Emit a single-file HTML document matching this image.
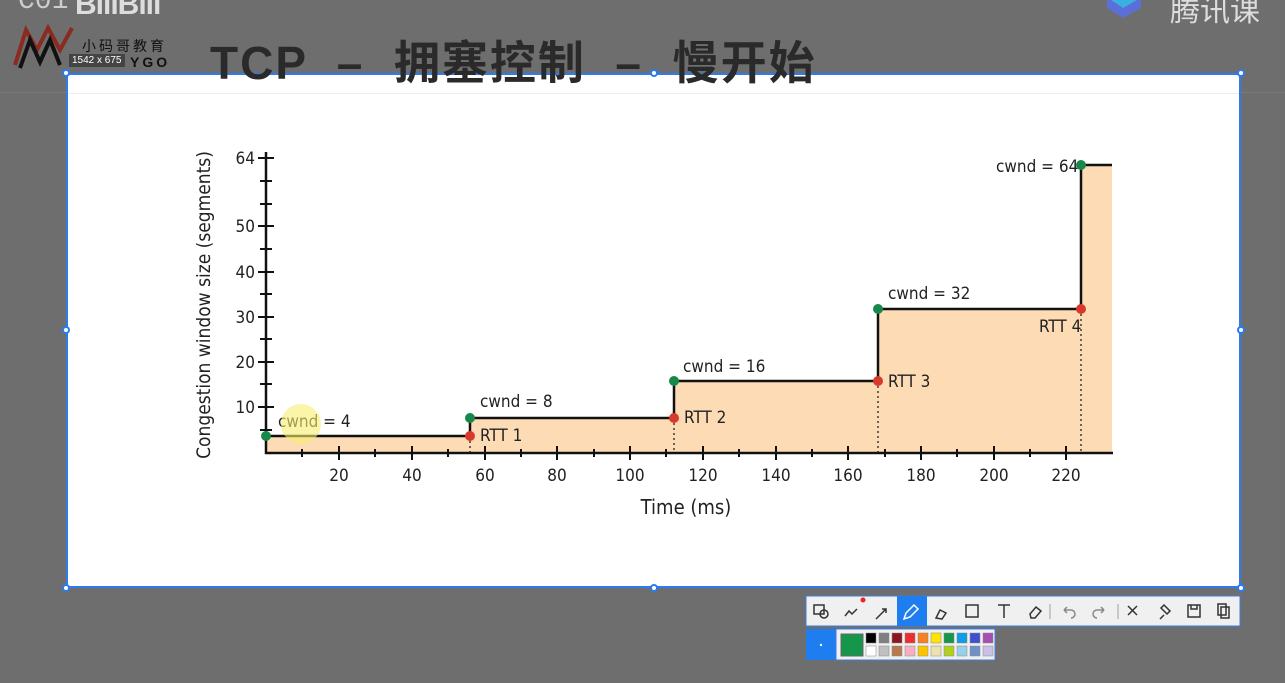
<!DOCTYPE html>
<html><head><meta charset="utf-8"><style>
body{margin:0;width:1285px;height:683px;background:#6e6e6e;overflow:hidden;position:relative;font-family:"Liberation Sans","Noto Sans CJK SC",sans-serif}
.abs{position:absolute}
</style></head><body>
<div class="abs" style="left:0;top:92px;width:1285px;height:1px;background:#7a7a7a"></div>
<div class="abs" style="left:18px;top:-14px;font-size:28px;color:#ccc;font-family:'Liberation Mono',monospace">C01</div>
<div class="abs" style="left:75px;top:-12px;font-size:30px;color:#ddd;font-weight:bold;letter-spacing:-1px">BılıBılı</div>
<svg class="abs" style="left:12px;top:20px" width="65" height="50"><path d="M3 45 L14 10 L25 30 L36 8 L48 30 L60 8" stroke="#8a2a20" stroke-width="4" fill="none"/><path d="M8 48 L18 20 L28 42 L38 20 L48 45" stroke="#111" stroke-width="4" fill="none"/></svg>
<div class="abs" style="left:82px;top:36px;font-size:14px;color:#111;letter-spacing:3px">小码哥教育</div>
<div class="abs" style="left:130px;top:54px;font-size:14px;color:#111;letter-spacing:3px;font-weight:bold">YGO</div>
<svg class="abs" style="left:1105px;top:0" width="40" height="22"><path d="M2 0 L2 8 L18 18 L36 8 L36 0" fill="#5b6fd8"/><path d="M6 0 L18 8 L32 0" fill="#3ab0e0"/></svg>
<div class="abs" style="left:1170px;top:-14px;font-size:30px;color:#ddd">腾讯课</div>
<div class="abs" style="left:66px;top:73px;width:1175px;height:515px;background:#fff;border:2px solid #2a7cf0;box-sizing:border-box"></div>
<div class="abs" style="left:68px;top:93px;width:1171px;height:1px;background:#eee"></div>
<div class="abs" style="left:210px;top:27px;font-size:46px;font-weight:bold;color:#2a2a2a;white-space:nowrap;letter-spacing:2px;z-index:2">TCP &nbsp;– &nbsp;拥塞控制 &nbsp;– &nbsp;慢开始</div>
<div class="abs" style="left:69px;top:54px;font-size:10px;color:#fff;background:#444;padding:1px 3px;z-index:3">1542 x 675</div>
<svg class="abs" style="left:0;top:0;z-index:4" width="1285" height="683">
<g fill="#2a7cf0"><circle cx="66" cy="73" r="4"/><circle cx="654" cy="73" r="4"/><circle cx="1241" cy="73" r="4"/><circle cx="66" cy="330" r="4"/><circle cx="1241" cy="330" r="4"/><circle cx="66" cy="588" r="4"/><circle cx="654" cy="588" r="4"/><circle cx="1241" cy="588" r="4"/></g>
<g fill="#fff"><circle cx="66" cy="73" r="2"/><circle cx="654" cy="73" r="2"/><circle cx="1241" cy="73" r="2"/><circle cx="66" cy="330" r="2"/><circle cx="1241" cy="330" r="2"/><circle cx="66" cy="588" r="2"/><circle cx="654" cy="588" r="2"/><circle cx="1241" cy="588" r="2"/></g>
<path d="M266 453 L266 436 L470 436 L470 418 L674 418 L674 381 L878 381 L878 309 L1081 309 L1081 165 L1112 165 L1112 453 Z" fill="#fddcb5"/>
<path d="M266 436 L470 436 L470 418 L674 418 L674 381 L878 381 L878 309 L1081 309 L1081 165 L1112 165" fill="none" stroke="#111" stroke-width="2.5"/>
<g stroke="#111" stroke-dasharray="2,3" stroke-width="1.2"><path d="M470 436V453M674 418V453M878 381V453M1081 309V453"/></g>
<path d="M266 152V453H1113" stroke="#111" stroke-width="2.5" fill="none"/>
<g stroke="#111" stroke-width="2"><path d="M258 158h16M258 407h16M258 362h16M258 317h16M258 272h16M258 226h16M260 430h12M260 384h12M260 339h12M260 294h12M260 249h12M260 204h12M260 181h12"/>
<path d="M339 446v14M412 446v14M485 446v14M557 446v14M630 446v14M703 446v14M776 446v14M848 446v14M921 446v14M994 446v14M1066 446v14M302 449v8M375 449v8M448 449v8M521 449v8M594 449v8M666 449v8M739 449v8M812 449v8M885 449v8M957 449v8M1030 449v8"/></g>
<g font-family="DejaVu Sans,sans-serif" font-stretch="condensed" style="font-stretch:condensed" font-size="17" fill="#222">
<g text-anchor="end"><text x="255" y="164">64</text><text x="255" y="232">50</text><text x="255" y="278">40</text><text x="255" y="323">30</text><text x="255" y="368">20</text><text x="255" y="413">10</text></g>
<g text-anchor="middle"><text x="339" y="481">20</text><text x="412" y="481">40</text><text x="485" y="481">60</text><text x="557" y="481">80</text><text x="630" y="481">100</text><text x="703" y="481">120</text><text x="776" y="481">140</text><text x="848" y="481">160</text><text x="921" y="481">180</text><text x="994" y="481">200</text><text x="1066" y="481">220</text>
<text x="686" y="514" font-size="20">Time (ms)</text></g>
<text transform="translate(210 305) rotate(-90)" text-anchor="middle" font-size="19">Congestion window size (segments)</text>
<text x="278" y="427">cwnd = 4</text><text x="480" y="407">cwnd = 8</text><text x="683" y="372">cwnd = 16</text><text x="888" y="299">cwnd = 32</text><text x="996" y="172">cwnd = 64</text>
<text x="480" y="441">RTT 1</text><text x="684" y="423">RTT 2</text><text x="888" y="387">RTT 3</text><text x="1039" y="332">RTT 4</text>
</g>
<circle cx="301" cy="424" r="20" fill="#f8ef70" opacity="0.6"/>
<g fill="#15884a"><circle cx="266" cy="436" r="5"/><circle cx="470" cy="418" r="5"/><circle cx="674" cy="381" r="5"/><circle cx="878" cy="309" r="5"/><circle cx="1081" cy="165" r="5"/></g>
<g fill="#d9382c"><circle cx="470" cy="436" r="5"/><circle cx="674" cy="418" r="5"/><circle cx="878" cy="381" r="5"/><circle cx="1081" cy="309" r="5"/></g>
<rect x="806" y="596" width="434" height="30" fill="#f0f0f0" stroke="#3a7ee8"/>
<rect x="897" y="596" width="30" height="30" fill="#1e7ef0"/>
<g stroke="#333" stroke-width="1.5" fill="none">
<rect x="814" y="605" width="10" height="9"/><circle cx="824" cy="614" r="4"/>
<path d="M845 616l4-5 3 3 5-5"/><path d="M876 619l10-10M882 609h4v4"/>
<path d="M904 619l2-6 8-8 4 4-8 8z" stroke="#fff"/>
<path d="M936 618l4-8 6 3-4 6z"/><rect x="966" y="605" width="12" height="12"/>
<path d="M998 605h12M1004 605v13"/><path d="M1030 614l6-7 5 4-6 7h-4z"/>
<path d="M1050 604v15M1118 604v15" stroke="#bbb"/>
<path d="M1064 610h7a4 4 0 0 1 0 8M1064 610l3-3M1064 610l3 3" stroke="#888"/>
<path d="M1104 610h-7a4 4 0 0 0 0 8M1104 610l-3-3M1104 610l-3 3" stroke="#888"/>
<path d="M1128 606l9 9M1137 606l-9 9"/>
<path d="M1160 619l4-4M1161 608l6 6 3-3-6-6z"/>
<rect x="1188" y="605" width="12" height="12"/><path d="M1191 605v4h6v-4"/>
<rect x="1218" y="604" width="8" height="11"/><rect x="1221" y="607" width="8" height="11"/></g>
<circle cx="863" cy="600" r="2.5" fill="#e22"/>
<rect x="806" y="629" width="30" height="31" fill="#1e7ef0"/><circle cx="821" cy="645" r="1.2" fill="#fff"/>
<rect x="836" y="629" width="159" height="31" fill="#f0f0f0" stroke="#3a7ee8"/>
<rect x="841" y="634" width="22" height="22" fill="#16964a" stroke="#666"/>
<g stroke="#888" stroke-width="0.5">
<rect x="866" y="633" width="10" height="10" fill="#000"/><rect x="879" y="633" width="10" height="10" fill="#808080"/><rect x="892" y="633" width="10" height="10" fill="#8b1520"/><rect x="905" y="633" width="10" height="10" fill="#ee2e2e"/><rect x="918" y="633" width="10" height="10" fill="#f98020"/><rect x="931" y="633" width="10" height="10" fill="#ffe400"/><rect x="944" y="633" width="10" height="10" fill="#16964a"/><rect x="957" y="633" width="10" height="10" fill="#0d9ee8"/><rect x="970" y="633" width="10" height="10" fill="#3f4fd0"/><rect x="983" y="633" width="10" height="10" fill="#a54fb0"/>
<rect x="866" y="646" width="10" height="10" fill="#fff"/><rect x="879" y="646" width="10" height="10" fill="#c0c0c0"/><rect x="892" y="646" width="10" height="10" fill="#b87850"/><rect x="905" y="646" width="10" height="10" fill="#f8b0c0"/><rect x="918" y="646" width="10" height="10" fill="#ffc400"/><rect x="931" y="646" width="10" height="10" fill="#efe0b0"/><rect x="944" y="646" width="10" height="10" fill="#b0d020"/><rect x="957" y="646" width="10" height="10" fill="#98d0e8"/><rect x="970" y="646" width="10" height="10" fill="#7090c8"/><rect x="983" y="646" width="10" height="10" fill="#c8c0e8"/></g>
</svg>
</body></html>
